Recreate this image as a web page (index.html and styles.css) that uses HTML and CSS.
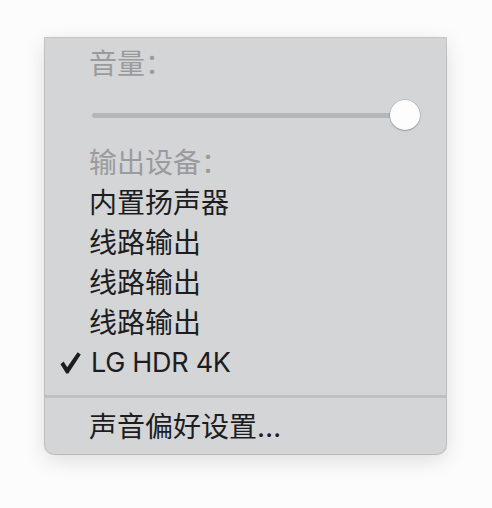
FILE: index.html
```html
<!DOCTYPE html>
<html lang="zh-CN">
<head>
<meta charset="utf-8">
<link rel="stylesheet" href="styles.css">
</head>
<body>
<div class="menu">
  <div class="row header">音量：</div>
  <div class="slider-row">
    <div class="track"></div>
    <div class="thumb"></div>
  </div>
  <div class="row header">输出设备：</div>
  <div class="row">内置扬声器</div>
  <div class="row">线路输出</div>
  <div class="row">线路输出</div>
  <div class="row">线路输出</div>
  <div class="row checked">
    <svg class="check" width="24" height="24" viewBox="0 0 24 24"><path d="M2.5 13.2 L5.6 10.6 L9.2 16.2 L19.6 1.2 L22.8 3.4 L10.3 22.4 L8.2 22.4 Z" fill="#1d1d1f"/></svg>
    <span class="latin">LG HDR 4K</span>
  </div>
  <div class="divider"></div>
  <div class="row">声音偏好设置…</div>
</div>
</body>
</html>
```
FILE: styles.css
```css
html, body {
  margin: 0;
  padding: 0;
  background: #fcfcfc;
}
body {
  font-family: "Inter", "Noto Sans CJK SC", sans-serif;
  width: 492px;
  height: 508px;
  overflow: hidden;
}
.menu {
  box-sizing: border-box;
  width: 401px;
  margin: 38px 0 0 45px;
  padding: 6px 0 7px;
  background: #d4d5d7;
  border-radius: 0 0 9px 9px;
  box-shadow: 0 0 0 1px rgba(0, 0, 0, 0.2), 0 6px 22px rgba(0, 0, 0, 0.13);
}
.row {
  box-sizing: border-box;
  height: 40px;
  display: flex;
  align-items: center;
  padding: 0 0 0 44px;
  font-size: 28px;
  line-height: 36px;
  color: #1d1d1f;
  white-space: nowrap;
}
.header {
  color: #9b9b9d;
}
.checked {
  padding: 0 0 0 13px;
}
.latin {
  font-size: 27px;
  letter-spacing: -0.3px;
}
.check {
  flex: none;
  margin-right: 9px;
}
.slider-row {
  box-sizing: border-box;
  height: 59px;
  padding: 3px 26px 0 47px;
  display: flex;
  align-items: center;
}
.track {
  flex: 1;
  height: 5px;
  border-radius: 3px;
  background: #b5b6b8;
}
.thumb {
  flex: none;
  width: 30px;
  height: 30px;
  margin-left: -8px;
  border-radius: 50%;
  background: #fdfdfd;
  box-shadow: 0 0 0 0.5px rgba(0, 0, 0, 0.18), 0 1px 2px rgba(0, 0, 0, 0.2);
}
.divider {
  height: 3px;
  margin: 12px 0 9px;
  background: #bfc0c2;
}
```
